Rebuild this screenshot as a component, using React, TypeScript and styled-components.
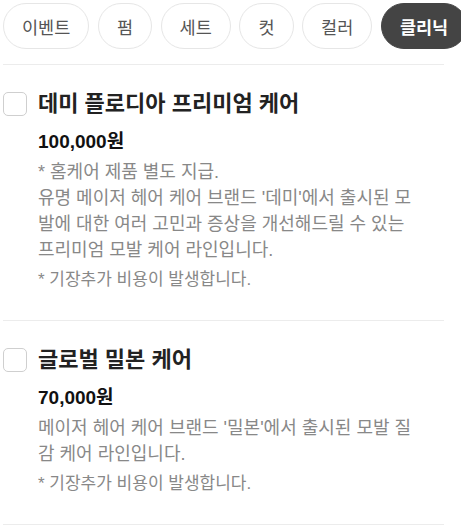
import React from 'react';
import styled, { createGlobalStyle } from 'styled-components';

const GlobalStyle = createGlobalStyle`
  html, body {
    margin: 0;
    padding: 0;
    background: #fff;
    overflow: hidden;
  }
  body {
    font-family: "Liberation Sans", "Noto Sans CJK KR", sans-serif;
  }
`

const Page = styled.div`
  width: 441px;
  padding: 3px 0 0 3px;
`

const TabRow = styled.div`
  display: flex;
  gap: 8.6px;
  white-space: nowrap;
  padding-bottom: 15px;
  border-bottom: 1px solid #ececec;
`

const Tab = styled.button<{ $active?: boolean }>`
  flex: none;
  height: 46px;
  padding: 0 18px;
  border-radius: 23px;
  border: 1px solid ${p => (p.$active ? '#444' : '#e6e6e6')};
  background: ${p => (p.$active ? '#444' : '#fff')};
  color: ${p => (p.$active ? '#fff' : '#555')};
  font-family: inherit;
  font-size: 17.5px;
  font-weight: ${p => (p.$active ? 700 : 400)};
`

const Item = styled.div`
  display: grid;
  grid-template-columns: 24px 1fr;
  column-gap: 11px;
  padding: 26px 20px 27px 0;
  border-bottom: 1px solid #ececec;
`

const Check = styled.span`
  width: 24px;
  height: 24px;
  box-sizing: border-box;
  border: 1px solid #cfcfcf;
  border-radius: 5px;
  margin-top: 1px;
`

const Body = styled.div`
  display: flex;
  flex-direction: column;
`

const Title = styled.div`
  font-size: 22px;
  font-weight: 700;
  color: #222;
  line-height: 26px;
`

const Price = styled.div`
  margin-top: 12px;
  font-size: 19px;
  font-weight: 700;
  color: #111;
  line-height: 26px;
`

const Desc = styled.div`
  margin-top: 4px;
  font-size: 18px;
  line-height: 26px;
  color: #888;
`

const Note = styled.div`
  margin-top: 4px;
  font-size: 17px;
  line-height: 26px;
  color: #888;
`

const tabs = ['이벤트', '펌', '세트', '컷', '컬러', '클리닉']

const items = [
  {
    title: '데미 플로디아 프리미엄 케어',
    price: '100,000원',
    desc: [
      '* 홈케어 제품 별도 지급.',
      "유명 메이저 헤어 케어 브랜드 '데미'에서 출시된 모발에 대한 여러 고민과 증상을 개선해드릴 수 있는 프리미엄 모발 케어 라인입니다.",
    ],
  },
  {
    title: '글로벌 밀본 케어',
    price: '70,000원',
    desc: ["메이저 헤어 케어 브랜드 '밀본'에서 출시된 모발 질감 케어 라인입니다."],
  },
]

const App: React.FC = () => {
  return (
    <Page>
      <GlobalStyle />
      <TabRow>
        {tabs.map(t => (
          <Tab key={t} $active={t === '클리닉'}>{t}</Tab>
        ))}
      </TabRow>
      {items.map(it => (
        <Item key={it.title}>
          <Check />
          <Body>
            <Title>{it.title}</Title>
            <Price>{it.price}</Price>
            <Desc>
              {it.desc.map(d => (
                <div key={d}>{d}</div>
              ))}
            </Desc>
            <Note>* 기장추가 비용이 발생합니다.</Note>
          </Body>
        </Item>
      ))}
    </Page>
  );
}

export default App;
